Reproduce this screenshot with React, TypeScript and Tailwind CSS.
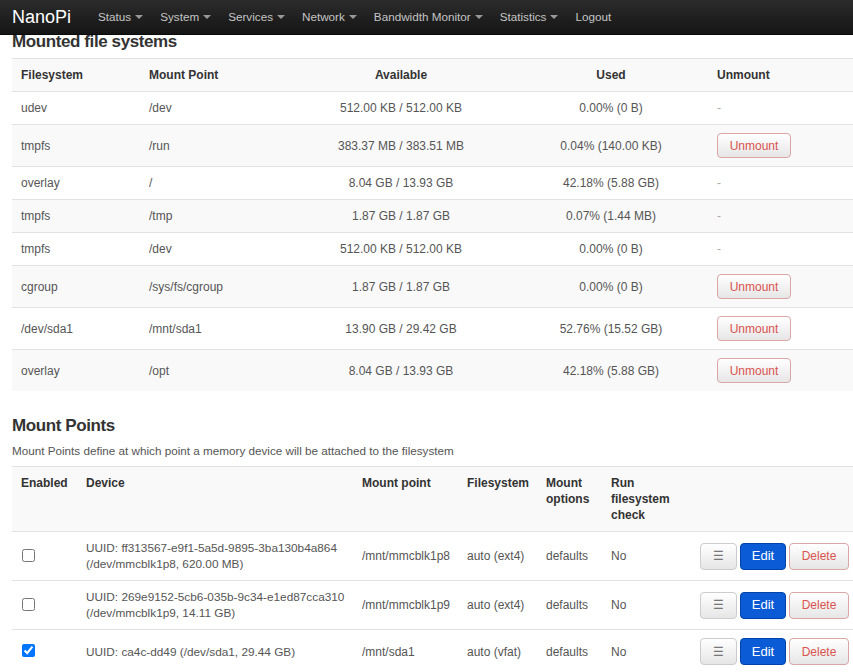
import React from "react";

const menu = [
  { label: "Status", caret: true },
  { label: "System", caret: true },
  { label: "Services", caret: true },
  { label: "Network", caret: true },
  { label: "Bandwidth Monitor", caret: true },
  { label: "Statistics", caret: true },
  { label: "Logout", caret: false },
];

const mounted = [
  { fs: "udev", mp: "/dev", avail: "512.00 KB / 512.00 KB", used: "0.00% (0 B)", unmount: false },
  { fs: "tmpfs", mp: "/run", avail: "383.37 MB / 383.51 MB", used: "0.04% (140.00 KB)", unmount: true },
  { fs: "overlay", mp: "/", avail: "8.04 GB / 13.93 GB", used: "42.18% (5.88 GB)", unmount: false },
  { fs: "tmpfs", mp: "/tmp", avail: "1.87 GB / 1.87 GB", used: "0.07% (1.44 MB)", unmount: false },
  { fs: "tmpfs", mp: "/dev", avail: "512.00 KB / 512.00 KB", used: "0.00% (0 B)", unmount: false },
  { fs: "cgroup", mp: "/sys/fs/cgroup", avail: "1.87 GB / 1.87 GB", used: "0.00% (0 B)", unmount: true },
  { fs: "/dev/sda1", mp: "/mnt/sda1", avail: "13.90 GB / 29.42 GB", used: "52.76% (15.52 GB)", unmount: true },
  { fs: "overlay", mp: "/opt", avail: "8.04 GB / 13.93 GB", used: "42.18% (5.88 GB)", unmount: true },
];

const mounts = [
  {
    enabled: false,
    uuid: "UUID: ff313567-e9f1-5a5d-9895-3ba130b4a864",
    dev: "(/dev/mmcblk1p8, 620.00 MB)",
    mp: "/mnt/mmcblk1p8",
    fs: "auto (ext4)",
  },
  {
    enabled: false,
    uuid: "UUID: 269e9152-5cb6-035b-9c34-e1ed87cca310",
    dev: "(/dev/mmcblk1p9, 14.11 GB)",
    mp: "/mnt/mmcblk1p9",
    fs: "auto (ext4)",
  },
  {
    enabled: true,
    uuid: "UUID: ca4c-dd49 (/dev/sda1, 29.44 GB)",
    dev: "",
    mp: "/mnt/sda1",
    fs: "auto (vfat)",
  },
];

const th = "px-[9px] py-[8px] leading-[16px] font-bold text-[#333] align-top";
const td = "px-[9px] py-[8px] leading-[16px] text-[#555] align-middle border-t border-[#e2e2e2]";
const redBtn =
  "rounded-[4px] border border-[#dba6a6] bg-gradient-to-b from-white to-[#e6e6e6] text-[#d9534f] text-[12px]";

const Caret = () => (
  <span className="inline-block w-0 h-0 border-t-[4px] border-x-[4px] border-t-[#999] border-x-transparent" />
);

export default function App() {
  return (
    <div className="w-[853px] h-[672px] overflow-hidden bg-white text-[12px] font-['Liberation_Sans',Arial,sans-serif]">
      <nav className="relative z-10 h-[35px] flex items-center pl-3 bg-gradient-to-b from-[#2c2c2c] to-[#151515] border-b border-[#0a0a0a]">
        <span className="text-white text-[18px] leading-none mr-[27px]">NanoPi</span>
        <div className="flex items-center gap-[17px] text-[11.7px]">
          {menu.map((m) => (
            <span key={m.label} className="flex items-center gap-[4px] text-[#c4c4c4]">
              {m.label}
              {m.caret && <Caret />}
            </span>
          ))}
        </div>
      </nav>

      <div className="pl-3">
        <h2 className="-mt-[4px] text-[17px] leading-[22px] font-bold tracking-[-0.4px] text-[#333]">
          Mounted file systems
        </h2>

        <table className="mt-[5px] table-fixed w-[846px] border-collapse">
          <colgroup>
            <col className="w-[128px]" />
            <col className="w-[148px]" />
            <col className="w-[226px]" />
            <col className="w-[194px]" />
            <col />
          </colgroup>
          <thead>
            <tr className="bg-[#f9f9f9] border-t border-[#e2e2e2]">
              <th className={th + " text-left align-middle"}>Filesystem</th>
              <th className={th + " text-left align-middle"}>Mount Point</th>
              <th className={th + " text-center align-middle"}>Available</th>
              <th className={th + " text-center align-middle"}>Used</th>
              <th className={th + " text-left align-middle"}>Unmount</th>
            </tr>
          </thead>
          <tbody>
            {mounted.map((r, i) => (
              <tr key={i} className={i % 2 === 1 ? "bg-[#f9f9f9]" : "bg-white"}>
                <td className={td}>{r.fs}</td>
                <td className={td}>{r.mp}</td>
                <td className={td + " text-center"}>{r.avail}</td>
                <td className={td + " text-center"}>{r.used}</td>
                <td className={td}>
                  {r.unmount ? (
                    <button className={redBtn + " w-[74px] h-[25px]"}>Unmount</button>
                  ) : (
                    <span className="text-[#aaa]">-</span>
                  )}
                </td>
              </tr>
            ))}
          </tbody>
        </table>

        <h2 className="mt-[24px] text-[17px] leading-[22px] font-bold tracking-[-0.4px] text-[#333]">
          Mount Points
        </h2>
        <p className="mt-[6px] leading-[16px] text-[11.7px] text-[#555]">
          Mount Points define at which point a memory device will be attached to the filesystem
        </p>

        <table className="mt-[7px] table-fixed w-[846px] border-collapse">
          <colgroup>
            <col className="w-[65px]" />
            <col className="w-[276px]" />
            <col className="w-[105px]" />
            <col className="w-[79px]" />
            <col className="w-[65px]" />
            <col className="w-[88px]" />
            <col />
          </colgroup>
          <thead>
            <tr className="bg-[#f9f9f9] border-t border-[#e2e2e2]">
              <th className={th + " text-left"}>Enabled</th>
              <th className={th + " text-left"}>Device</th>
              <th className={th + " text-left"}>Mount point</th>
              <th className={th + " text-left"}>Filesystem</th>
              <th className={th + " text-left"}>Mount options</th>
              <th className={th + " text-left"}>Run filesystem check</th>
              <th className={th}></th>
            </tr>
          </thead>
          <tbody>
            {mounts.map((r, i) => (
              <tr key={i}>
                <td className={td}>
                  <input
                    type="checkbox"
                    readOnly
                    checked={r.enabled}
                    className="block w-[13px] h-[13px] m-0 ml-px -mt-[2px]"
                  />
                </td>
                <td className={td + " whitespace-nowrap text-[11.8px]"}>
                  {r.uuid}
                  {r.dev && (
                    <>
                      <br />
                      {r.dev}
                    </>
                  )}
                </td>
                <td className={td}>{r.mp}</td>
                <td className={td}>{r.fs}</td>
                <td className={td}>defaults</td>
                <td className={td}>No</td>
                <td className={td + " text-right"}>
                  <div className="flex justify-end gap-[3px]">
                    <button className="w-[37px] h-[27px] rounded-[4px] border border-[#ccc] bg-gradient-to-b from-white to-[#e6e6e6] text-[#777] text-[12px]">
                      ☰
                    </button>
                    <button className="w-[46px] h-[27px] rounded-[4px] border border-[#0043a8] bg-[#0b5bd6] text-white text-[13px]">
                      Edit
                    </button>
                    <button className={redBtn + " w-[60px] h-[27px]"}>Delete</button>
                  </div>
                </td>
              </tr>
            ))}
          </tbody>
        </table>
      </div>
    </div>
  );
}
